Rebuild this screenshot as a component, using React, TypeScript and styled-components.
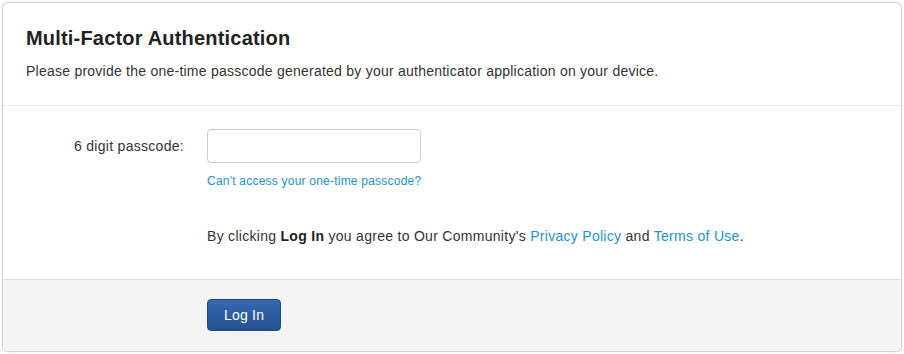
import styled, { createGlobalStyle } from "styled-components";

const GlobalStyle = createGlobalStyle`
  body {
    margin: 0;
    background: #ffffff;
    font-family: "Liberation Sans", Arial, sans-serif;
    color: #333333;
  }
`

const Card = styled.div`
  margin: 2px;
  border: 1px solid #d4d4d4;
  border-radius: 6px;
  box-shadow: 0 0 2px rgba(0, 0, 0, 0.12);
  overflow: hidden;
  background: #ffffff;
`

const Header = styled.div`
  padding: 21px 23px 24px;
  border-bottom: 1px dotted #dddddd;
`

const Title = styled.h1`
  margin: 0;
  font-size: 20px;
  line-height: 28px;
  font-weight: bold;
  letter-spacing: 0.19px;
  color: #222222;
`

const Subtitle = styled.p`
  margin: 9px 0 0;
  font-size: 14px;
  line-height: 20px;
  letter-spacing: 0.24px;
  color: #333333;
`

const Body = styled.div`
  display: grid;
  grid-template-columns: 181px 1fr;
  column-gap: 23px;
  padding: 23px 0 33px;
`

const Label = styled.label`
  text-align: right;
  font-size: 14px;
  line-height: 34px;
  letter-spacing: 0.29px;
  color: #333333;
`

const Field = styled.div`
  display: flex;
  flex-direction: column;
  align-items: flex-start;
`

const Input = styled.input`
  box-sizing: border-box;
  width: 214px;
  height: 34px;
  border: 1px solid #cccccc;
  border-radius: 4px;
  padding: 6px 10px;
  font-family: inherit;
  font-size: 14px;
  outline: none;
`

const SmallLink = styled.a`
  margin-top: 10px;
  font-size: 12px;
  line-height: 16px;
  letter-spacing: 0.22px;
  color: #1d93cc;
  text-decoration: none;
`

const Agreement = styled.p`
  grid-column: 2;
  margin: 37px 0 0;
  font-size: 14px;
  line-height: 20px;
  letter-spacing: 0.29px;
  color: #333333;

  strong {
    color: #222222;
  }
`

const TextLink = styled.a`
  color: #1d93cc;
  text-decoration: none;
`

const Footer = styled.div`
  border-top: 1px solid #dddddd;
  background: #f4f4f4;
  padding: 19px 0 20px 204px;
`

const Button = styled.button`
  box-sizing: border-box;
  height: 32px;
  padding: 0 16px;
  border: 1px solid #1f4780;
  border-radius: 4px;
  background: linear-gradient(to bottom, #3569b1 0%, #24518f 100%);
  color: #ffffff;
  font-family: inherit;
  font-size: 14px;
  letter-spacing: 0.2px;
  cursor: pointer;
`

export default function App() {
    return (
        <>
            <GlobalStyle/>
            <Card>
                <Header>
                    <Title>Multi-Factor Authentication</Title>
                    <Subtitle>
                        Please provide the one-time passcode generated by your authenticator application on your device.
                    </Subtitle>
                </Header>
                <Body>
                    <Label htmlFor="passcode">6 digit passcode:</Label>
                    <Field>
                        <Input id="passcode" type="text"/>
                        <SmallLink href="#">Can't access your one-time passcode?</SmallLink>
                    </Field>
                    <Agreement>
                        By clicking <strong>Log In</strong> you agree to Our Community's{" "}
                        <TextLink href="#">Privacy Policy</TextLink> and{" "}
                        <TextLink href="#">Terms of Use</TextLink>.
                    </Agreement>
                </Body>
                <Footer>
                    <Button type="button">Log In</Button>
                </Footer>
            </Card>
        </>
    )
}
